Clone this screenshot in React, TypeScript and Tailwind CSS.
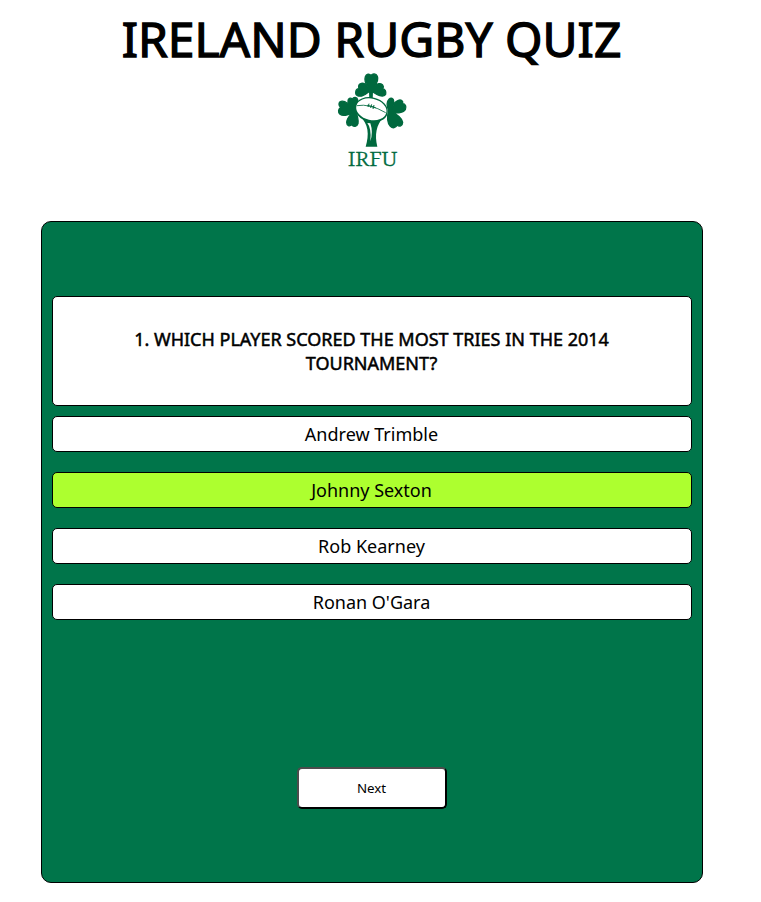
const answers = ["Andrew Trimble", "Johnny Sexton", "Rob Kearney", "Ronan O'Gara"];
const selected = 1;

function Logo() {
  return (
    <svg className="h-[108px] w-[84px] shrink-0" viewBox="0 0 252 324" fill="#00693e">
      <g stroke="#00693e" strokeWidth="4" strokeLinejoin="round">
        {/* Top shamrock */}
        <path transform="translate(0 4)" d="M115 58C107 49 103 37 106 28C109 19 118 18 123 24C128 18 138 18 142 27C146 37 139 49 133 56C141 48 153 46 158 53C161 57 160 61 158 64C165 65 169 73 167 81C164 89 150 86 142 82C136 79 130 76 127 72L126 97H120L119 72C113 77 105 83 95 86C85 88 77 85 77 77C77 69 81 64 87 64C84 56 87 49 94 48C102 47 109 51 115 58Z" />
        {/* Left shamrock */}
        <path d="M68 132C59 121 53 114 54 105C54 97 61 94 67 99C71 92 81 93 83 101C84 110 80 122 77 136C82 149 86 163 84 173C81 183 70 184 65 176C59 183 50 179 50 169C50 158 59 149 67 140C54 148 38 151 30 145C23 138 25 129 32 124C25 119 25 108 33 106C46 103 59 117 68 132Z" />
        {/* Right shamrock */}
        <path d="M176 134C170 119 171 106 177 100C183 94 191 97 191 105C192 113 188 122 185 129C188 118 195 107 205 103C213 100 220 105 218 113C226 113 230 122 226 131C220 141 203 143 186 138C200 144 217 157 218 169C218 180 208 183 201 177C198 186 188 188 181 181C172 172 170 150 176 137Z" />
      </g>
      {/* Tree trunk */}
      <path d="M89 150C116 173 118 207 107 242L142 242C133 207 139 177 160 154Z" />
      {/* Ball */}
      <ellipse cx="124" cy="131" rx="50" ry="37" transform="rotate(13 124 131)" />
      <ellipse cx="124" cy="130" rx="46" ry="32" transform="rotate(13 124 130)" fill="#fff" />
      <path d="M81 119Q119 112 167 140" fill="none" stroke="#00693e" strokeWidth="2.5" />
      <path d="M112 118L137 125M117 113L114 123M125 115L122 126M132 117L129 129" fill="none" stroke="#00693e" strokeWidth="3" />
      <path d="M112 171Q125 187 121 226Q130 198 121 172Z" fill="#fff" />
      <text x="53" y="301" textLength="149" lengthAdjust="spacingAndGlyphs" fontSize="61" stroke="#00693e" strokeWidth="1.2" className="font-['Noto_Serif','Liberation_Serif',serif] font-light">IRFU</text>
    </svg>
  );
}

export default function App() {
  return (
    <main className="flex h-[902px] w-[743px] flex-col items-center bg-white font-['Noto_Sans',sans-serif] text-black">
      <h1 className="mt-[6px] h-[60px] whitespace-nowrap text-[48px] leading-[65px] [-webkit-text-stroke:1.3px_black]">IRELAND RUGBY QUIZ</h1>
      <Logo />
      <section className="mt-[47px] flex h-[662px] w-[662px] flex-col items-center rounded-[10px] border border-black bg-[#00754a] px-2.5 pt-[74px]">
        <h2 className="flex h-[110px] w-full shrink-0 items-center justify-center rounded-[5px] border border-black bg-white px-16 text-center text-[18px] leading-6 [-webkit-text-stroke:0.5px_black]">
          <span>1. WHICH PLAYER SCORED THE MOST TRIES IN THE 2014<br />TOURNAMENT?</span>
        </h2>
        <div className="mt-2.5 flex w-full flex-col gap-5">
          {answers.map((answer, index) => (
            <div key={answer} className={`flex h-9 items-center justify-center rounded-[5px] border border-black text-[18px] ${index === selected ? "bg-[#adff2f]" : "bg-white"}`}>{answer}</div>
          ))}
        </div>
        <button className="mt-[147px] h-[42px] w-[150px] rounded-[5px] border-2 border-[#4c4c4c] border-r-black border-b-black bg-white pt-0.5 text-[13.333px]">Next</button>
      </section>
    </main>
  );
}
